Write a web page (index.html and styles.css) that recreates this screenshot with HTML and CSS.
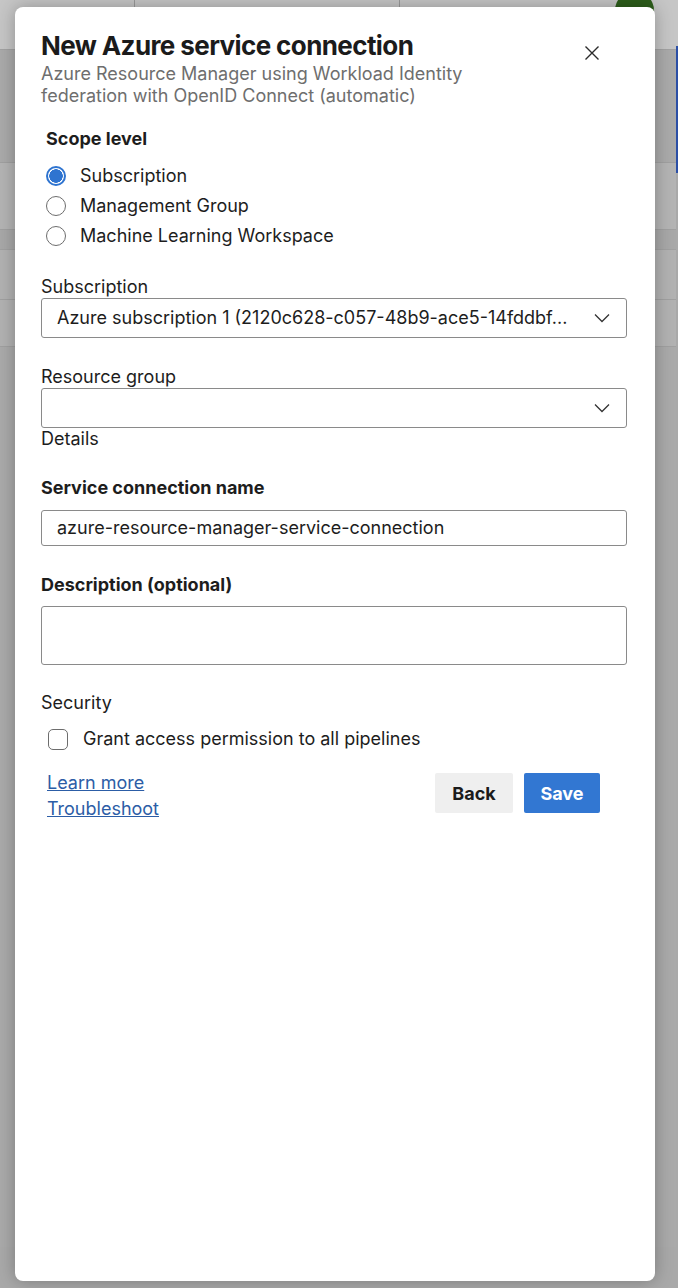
FILE: index.html
```html
<!DOCTYPE html>
<html lang="en">
<head>
<meta charset="utf-8">
<title>New Azure service connection</title>
<link rel="stylesheet" href="styles.css">
</head>
<body>
<div class="backdrop">
  <div class="bg-top">
    <div class="bg-cell bg-cell-a"></div>
    <div class="bg-cell bg-cell-b"></div>
    <div class="bg-cell bg-cell-c"><span class="avatar"></span></div>
  </div>
  <div class="bg-body">
    <div class="bg-rows">
      <div class="bg-row r1"></div>
      <div class="bg-row r2"></div>
      <div class="bg-row r3"></div>
      <div class="bg-row r4"></div>
      <div class="bg-row r5"></div>
      <div class="bg-row r6"></div>
    </div>
    <div class="bg-accent"></div>
  </div>
</div>

<div class="dialog" role="dialog" aria-labelledby="dlg-title">
  <div class="dlg-header">
    <div class="dlg-titles">
      <h1 id="dlg-title" class="dlg-title">New Azure service connection</h1>
      <p class="dlg-subtitle">Azure Resource Manager using Workload Identity federation with OpenID Connect (automatic)</p>
    </div>
    <button class="close-btn" aria-label="Close">
      <svg width="16" height="16" viewBox="0 0 16 16" aria-hidden="true"><path d="M1.5 1.5 L14.5 14.5 M14.5 1.5 L1.5 14.5" stroke="#2b2b2b" stroke-width="1.4" fill="none"/></svg>
    </button>
  </div>

  <div class="scope">
    <div class="label-bold scope-label">Scope level</div>
    <div class="radio-row"><span class="radio checked"></span><span class="radio-text">Subscription</span></div>
    <div class="radio-row"><span class="radio"></span><span class="radio-text">Management Group</span></div>
    <div class="radio-row"><span class="radio"></span><span class="radio-text">Machine Learning Workspace</span></div>
  </div>

  <div class="field field-sub">
    <div class="label">Subscription</div>
    <div class="select">
      <span class="select-text">Azure subscription 1 (2120c628-c057-48b9-ace5-14fddbf...</span>
      <svg class="chev" width="16" height="10" viewBox="0 0 16 10" aria-hidden="true"><path d="M1 1.5 L8 8.5 L15 1.5" stroke="#333" stroke-width="1.3" fill="none"/></svg>
    </div>
  </div>

  <div class="field field-rg">
    <div class="label">Resource group</div>
    <div class="select">
      <span class="select-text"></span>
      <svg class="chev" width="16" height="10" viewBox="0 0 16 10" aria-hidden="true"><path d="M1 1.5 L8 8.5 L15 1.5" stroke="#333" stroke-width="1.3" fill="none"/></svg>
    </div>
    <div class="label">Details</div>
  </div>

  <div class="field field-name">
    <div class="label-bold">Service connection name</div>
    <div class="input">azure-resource-manager-service-connection</div>
  </div>

  <div class="field field-desc">
    <div class="label-bold">Description (optional)</div>
    <div class="textarea"></div>
  </div>

  <div class="field field-sec">
    <div class="label">Security</div>
    <div class="check-row"><span class="checkbox"></span><span class="check-text">Grant access permission to all pipelines</span></div>
  </div>

  <div class="footer">
    <div class="links">
      <a class="link" href="#">Learn more</a>
      <a class="link" href="#">Troubleshoot</a>
    </div>
    <div class="buttons">
      <button class="btn btn-back">Back</button>
      <button class="btn btn-save">Save</button>
    </div>
  </div>
</div>
</body>
</html>
```

FILE: styles.css
```css
* { box-sizing: border-box; }
html, body { margin: 0; padding: 0; }
body {
  width: 678px;
  height: 1288px;
  overflow: hidden;
  position: relative;
  background: #a9a9a9;
  font-family: Inter, "Liberation Sans", sans-serif;
  color: #1d1d1d;
}

/* backdrop page (dimmed) */
.backdrop { width: 678px; height: 1288px; }
.bg-top {
  height: 50px;
  display: flex;
  background: #c6c6c6;
  border-bottom: 1px solid #a2a2a2;
}
.bg-cell { height: 100%; }
.bg-cell-a { width: 135px; border-right: 1px solid #9a9a9a; }
.bg-cell-b { width: 265px; border-right: 1px solid #9a9a9a; }
.bg-cell-c { flex: 1; position: relative; }
.avatar {
  position: absolute;
  left: 215px;
  top: -9px;
  width: 39px;
  height: 39px;
  border-radius: 50%;
  background: #2d5e1b;
}
.bg-body { display: flex; }
.bg-rows { flex: 1; }
.bg-row { border-bottom: 1px solid #a0a0a0; }
.r1 { height: 113px; background: #aaaaaa; }
.r2 { height: 67px; background: #b4b4b4; }
.r3 { height: 20px; background: #a8a8a8; }
.r4 { height: 50px; background: #b2b2b2; }
.r5 { height: 47px; background: #b2b2b2; }
.r6 { height: 900px; background: #aaaaaa; border-bottom: 0; }
.bg-accent { width: 2px; height: 127px; background: #2b4fa6; margin-top: -4px; }

/* dialog */
.dialog {
  position: absolute;
  left: 15px;
  top: 7px;
  width: 640px;
  height: 1274px;
  background: #fff;
  border-radius: 8px;
  box-shadow: 0 0 18px rgba(0, 0, 0, 0.28);
  padding: 23px 28px 0 26px;
}
.dlg-header { display: flex; justify-content: space-between; align-items: flex-start; }
.dlg-title {
  margin: 0;
  font-size: 26px;
  line-height: 32px;
  font-weight: 700;
  letter-spacing: -0.6px;
  color: #1b1b1b;
}
.dlg-subtitle {
  margin: 1px 0 0;
  width: 440px;
  font-size: 18px;
  line-height: 22px;
  color: #6e6e6e;
}
.close-btn {
  border: 0;
  background: none;
  padding: 0;
  margin: 15px 27px 0 0;
  width: 16px;
  height: 16px;
  display: flex;
  cursor: pointer;
}

.label, .label-bold, .radio-text, .check-text, .select-text, .input {
  font-size: 18px;
  line-height: 22px;
}
.label-bold { font-weight: 700; }

.scope { margin-top: 21px; padding-left: 5px; }
.scope-label { margin-bottom: 11px; }
.radio-row { height: 30px; display: flex; align-items: center; gap: 14px; }
.radio {
  width: 20px;
  height: 20px;
  border-radius: 50%;
  border: 1px solid #6d6d6d;
  background: #fff;
  flex: none;
}
.radio.checked {
  border: 2px solid #2f74d0;
  background: radial-gradient(circle, #2f74d0 0 6.5px, #fff 7px);
}

.field-sub { margin-top: 25px; }
.field-rg { margin-top: 28px; }
.field-name { margin-top: 27px; }
.field-desc { margin-top: 28px; }
.field-sec { margin-top: 27px; }

.select {
  height: 40px;
  border: 1px solid #8a8a8a;
  border-radius: 3px;
  display: flex;
  align-items: center;
  justify-content: space-between;
  padding: 0 16px 0 15px;
}
.chev { flex: none; }
.input {
  margin-top: 11px;
  height: 36px;
  border: 1px solid #8a8a8a;
  border-radius: 3px;
  padding: 0 15px;
  display: flex;
  align-items: center;
}
.textarea {
  margin-top: 10px;
  height: 59px;
  border: 1px solid #8a8a8a;
  border-radius: 3px;
}

.check-row { margin-top: 14px; display: flex; align-items: center; gap: 15px; padding-left: 7px; height: 22px; }
.checkbox {
  width: 20px;
  height: 21px;
  border: 1px solid #6d6d6d;
  border-radius: 5px;
  flex: none;
}

.footer {
  margin-top: 20px;
  display: flex;
  justify-content: space-between;
  align-items: flex-start;
  padding: 0 27px 0 6px;
}
.links { display: flex; flex-direction: column; }
.link {
  font-size: 18px;
  line-height: 26px;
  color: #2c5da6;
  text-decoration: underline;
}
.buttons { display: flex; gap: 11px; margin-top: 3px; }
.btn {
  height: 40px;
  border: 0;
  border-radius: 2px;
  font-family: inherit;
  font-size: 18px;
  font-weight: 700;
  padding: 0;
}
.btn-back { width: 78px; background: #efefef; color: #1b1b1b; }
.btn-save { width: 76px; background: #3277d2; color: #fff; }
```
